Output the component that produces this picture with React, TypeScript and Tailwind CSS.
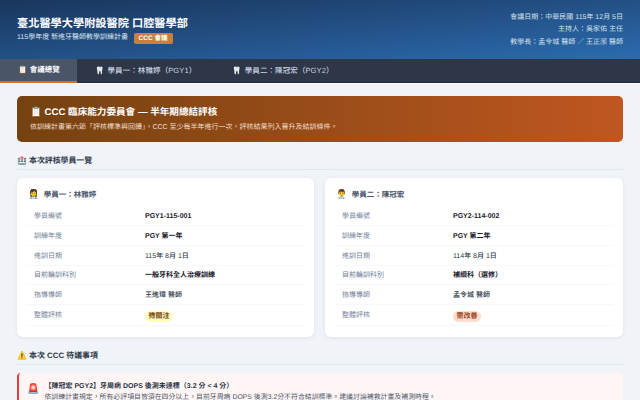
const font = "font-['Liberation_Sans','Noto_Sans_CJK_TC',sans-serif] [text-rendering:geometricPrecision]";

const trainees = [
  {
    icon: '👩‍⚕️',
    name: '學員一：林雅婷',
    rows: [
      ['學員編號', 'PGY1-115-001', true],
      ['訓練年度', 'PGY 第一年', true],
      ['進訓日期', '115年 8月 1日', false],
      ['目前輪訓科別', '一般牙科全人治療訓練', true],
      ['指導導師', '王進瑋 醫師', false],
    ],
    badge: '待關注',
    badgeClass: 'bg-[#fefcbf] text-[#744210]',
  },
  {
    icon: '👨‍⚕️',
    name: '學員二：陳冠宏',
    rows: [
      ['學員編號', 'PGY2-114-002', true],
      ['訓練年度', 'PGY 第二年', true],
      ['進訓日期', '114年 8月 1日', false],
      ['目前輪訓科別', '補綴科（選修）', true],
      ['指導導師', '孟令城 醫師', false],
    ],
    badge: '需改善',
    badgeClass: 'bg-[#fbdccd] text-[#9c4221]',
  },
];

function TraineeCard({ t }: { t: (typeof trainees)[number] }) {
  return (
    <div className="bg-white rounded-[6px] shadow-[0_1px_4px_rgba(0,0,0,0.08)] px-[10px] pt-[9.5px] pb-[10.5px]">
      <div className="flex items-center gap-[4px] text-[7.5px] font-bold text-[#4a5568] h-[15px] mb-[4.1px] pl-[1.5px]">
        <span className="text-[9px]">{t.icon}</span>
        <span>{t.name}</span>
      </div>
      {t.rows.map(([label, value, bold]) => (
        <div key={label as string} className="grid grid-cols-[111px_1fr] items-center h-[19.7px] border-b border-[#f7f8fa] pl-[7px] pt-[3px] text-[7px]">
          <span className="text-[#718096]">{label}</span>
          <span className={bold ? 'font-bold text-[#1a202c]' : 'font-medium text-[#2d3748]'}>{value}</span>
        </div>
      ))}
      <div className="grid grid-cols-[111px_1fr] items-center h-[21.4px] border-b border-[#f7f8fa] pl-[7px] pt-[3px] text-[7px]">
        <span className="text-[#718096]">整體評核</span>
        <span className="flex"><span className={`rounded-full px-[3.5px] py-[1.5px] leading-[8px] font-bold ${t.badgeClass}`}>{t.badge}</span></span>
      </div>
    </div>
  );
}

export default function App() {
  return (
    <div className={`${font} w-[640px] h-[400px] overflow-hidden bg-[#f0f4f8]`}>
      <header className="h-[59px] bg-gradient-to-br from-[#1a365d] to-[#2b6cb0] flex items-center justify-between px-[17px] text-white">
        <div className="pt-[2px]">
          <h1 className="text-[11.2px] font-bold leading-[15px] mb-[1px]">臺北醫學大學附設醫院 口腔醫學部</h1>
          <div className="flex items-center gap-[5.5px] text-[7px] text-[#dbe6f2]">
            <span>115學年度 新進牙醫師教學訓練計畫</span>
            <span className="bg-[#cc7f3a] text-white font-bold text-[6.5px] rounded-[2px] px-[5px] py-[1.5px] leading-[8px]">CCC 會議</span>
          </div>
        </div>
        <div className="text-right text-[7px] leading-[12.6px] text-[#d5e0ec] pt-[2.5px]">
          <div>會議日期：中華民國 115年 12月 5日</div>
          <div>主持人：吳家佑 主任</div>
          <div>教學長：孟令城 醫師 ／ 王正潔 醫師</div>
        </div>
      </header>
      <nav className="h-[24px] bg-[#2d3748] flex text-[7.5px] font-medium text-[#cbd5e0]">
        <div className="w-[77px] bg-[#4a5568] border-b-2 border-[#dd6b20] flex items-center pl-[18px] gap-[2.5px] text-white font-bold">
          <span>📋</span><span>會議總覽</span>
        </div>
        <div className="px-[18px] flex items-center gap-[3px] border-b border-[#1f2937] tracking-[0.1px]">
          <span>🦷</span><span>學員一：林雅婷（PGY1）</span>
        </div>
        <div className="px-[18px] flex items-center gap-[3px] border-b border-[#1f2937] tracking-[0.1px]">
          <span>🦷</span><span>學員二：陳冠宏（PGY2）</span>
        </div>
        <div className="flex-1 border-b border-[#1f2937]" />
      </nav>
      <div className="h-px bg-white" />
      <main className="px-[17px] pt-[12px]">
        <section className="h-[46px] rounded-[5px] bg-gradient-to-r from-[#744210] to-[#c05621] text-white px-[13px] flex flex-col justify-center">
          <h2 className="text-[9.6px] font-bold leading-[12px] mb-[4px]">📋 CCC 臨床能力委員會 — 半年期總結評核</h2>
          <p className="text-[7px] leading-[9px] text-[#f3dfcd]">依訓練計畫第六節「評核標準與回饋」，CCC 至少每半年進行一次，評核結果列入晉升及結訓條件。</p>
        </section>
        <h3 className="mt-[12px] h-[16px] text-[7.9px] font-bold text-[#2d3748] border-b border-[#e2e8f0] leading-[14px]">🏥 本次評核學員一覽</h3>
        <div className="grid grid-cols-[297px_298px] gap-[11px] mt-[8px]">
          {trainees.map((t) => <TraineeCard key={t.name} t={t} />)}
        </div>
        <h3 className="mt-[12px] h-[16px] text-[7.9px] font-bold text-[#2d3748] border-b border-[#e2e8f0] leading-[14px]">⚠️ 本次 CCC 待議事項</h3>
        <div className="mt-[8px] bg-[#fff5f5] border-l-2 border-[#e53e3e] rounded-[4px] flex gap-[5px] pl-[8px] pt-[8px] h-[40px]">
          <span className="text-[10px] leading-[14px] pt-[2px]">🚨</span>
          <div>
            <div className="text-[7px] font-bold text-[#2d3748] leading-[11px] mb-[0.5px]">【陳冠宏 PGY2】牙周病 DOPS 後測未達標（3.2 分 &lt; 4 分）</div>
            <div className="text-[6.9px] text-[#4a5568] leading-[11px]">依訓練計畫規定，所有必評項目皆須在四分以上，目前牙周病 DOPS 後測3.2分不符合結訓標準。建議討論補救計畫及補測時程。</div>
          </div>
        </div>
      </main>
    </div>
  );
}
